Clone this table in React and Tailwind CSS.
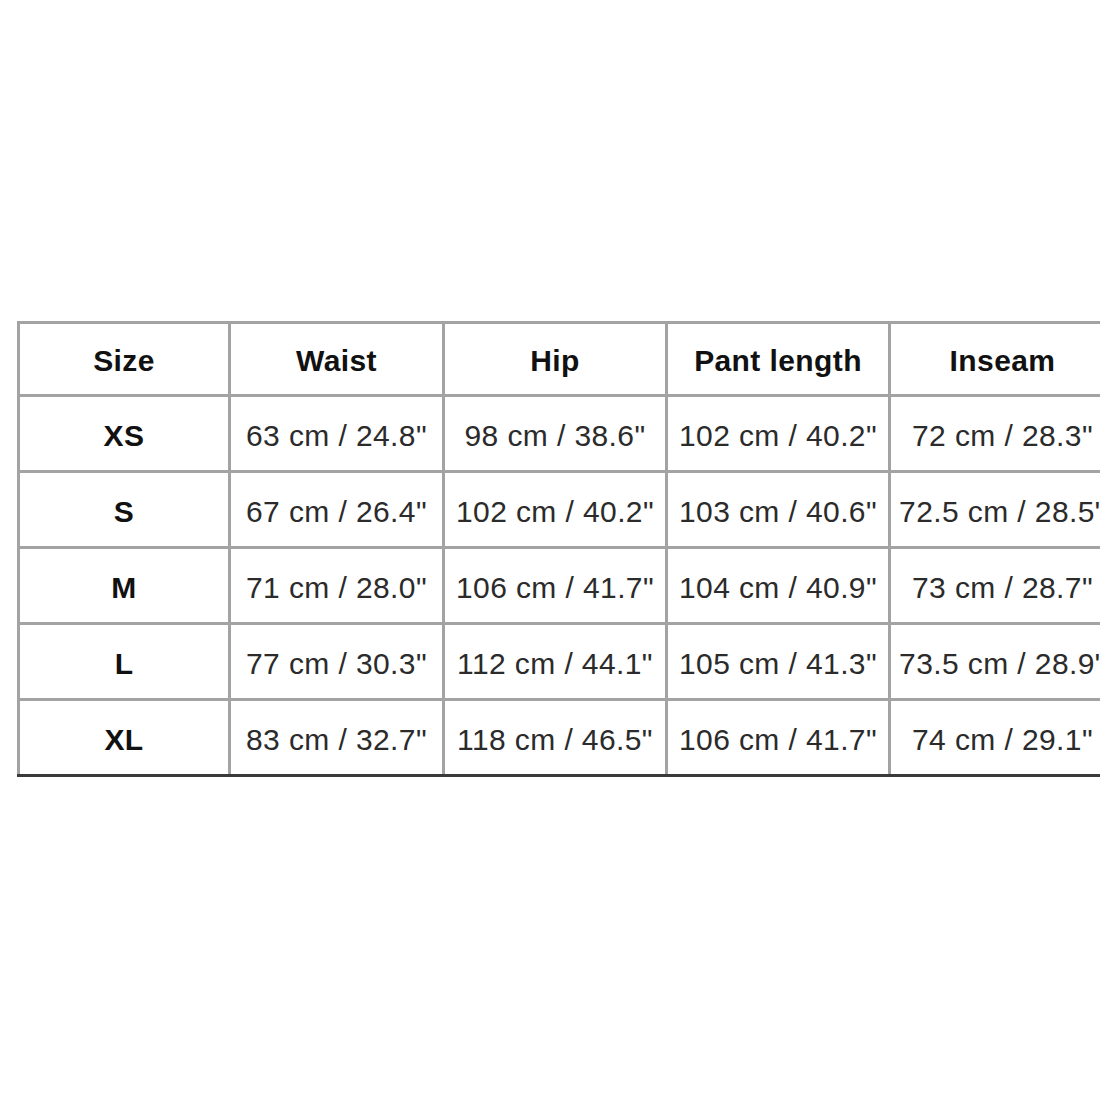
const headers = ["Size", "Waist", "Hip", "Pant length", "Inseam"];

const rows = [
    ["XS", "63 cm / 24.8\"", "98 cm / 38.6\"", "102 cm / 40.2\"", "72 cm / 28.3\""],
    ["S", "67 cm / 26.4\"", "102 cm / 40.2\"", "103 cm / 40.6\"", "72.5 cm / 28.5\""],
    ["M", "71 cm / 28.0\"", "106 cm / 41.7\"", "104 cm / 40.9\"", "73 cm / 28.7\""],
    ["L", "77 cm / 30.3\"", "112 cm / 44.1\"", "105 cm / 41.3\"", "73.5 cm / 28.9\""],
    ["XL", "83 cm / 32.7\"", "118 cm / 46.5\"", "106 cm / 41.7\"", "74 cm / 29.1\""],
];

const widths = ["w-[211px]", "w-[214px]", "w-[223px]", "w-[223px]", "w-[226px]"];

export default function App() {
    return (
        <div className="w-[1100px] h-[1100px] overflow-hidden bg-white" style={{ fontFamily: '"Liberation Sans", Arial, sans-serif' }}>
            <div className="pt-[321px] pl-[17px]">
                <table className="border-collapse table-fixed w-[1097px] text-[30px] tracking-[0.4px]">
                    <colgroup>
                        {widths.map((w, i) => (
                            <col key={i} className={w} />
                        ))}
                    </colgroup>
                    <thead>
                        <tr className="h-[73px]">
                            {headers.map((h) => (
                                <th
                                    key={h}
                                    className="border-[3px] border-[#a3a3a3] text-center font-bold text-[#111] p-0 pt-[2px] whitespace-nowrap"
                                >
                                    {h}
                                </th>
                            ))}
                        </tr>
                    </thead>
                    <tbody>
                        {rows.map((r, ri) => (
                            <tr key={r[0]} className="h-[76px]">
                                {r.map((c, ci) => (
                                    <td
                                        key={ci}
                                        className={
                                            "border-[3px] border-[#a3a3a3] text-center p-0 pt-[4px] whitespace-nowrap overflow-visible " +
                                            (ci === 0 ? "font-bold text-[#111] " : "text-[#2b2b2b] ") +
                                            (ri === rows.length - 1 ? "border-b-[#3a3a3a]" : "")
                                        }
                                    >
                                        {c}
                                    </td>
                                ))}
                            </tr>
                        ))}
                    </tbody>
                </table>
            </div>
        </div>
    );
}
